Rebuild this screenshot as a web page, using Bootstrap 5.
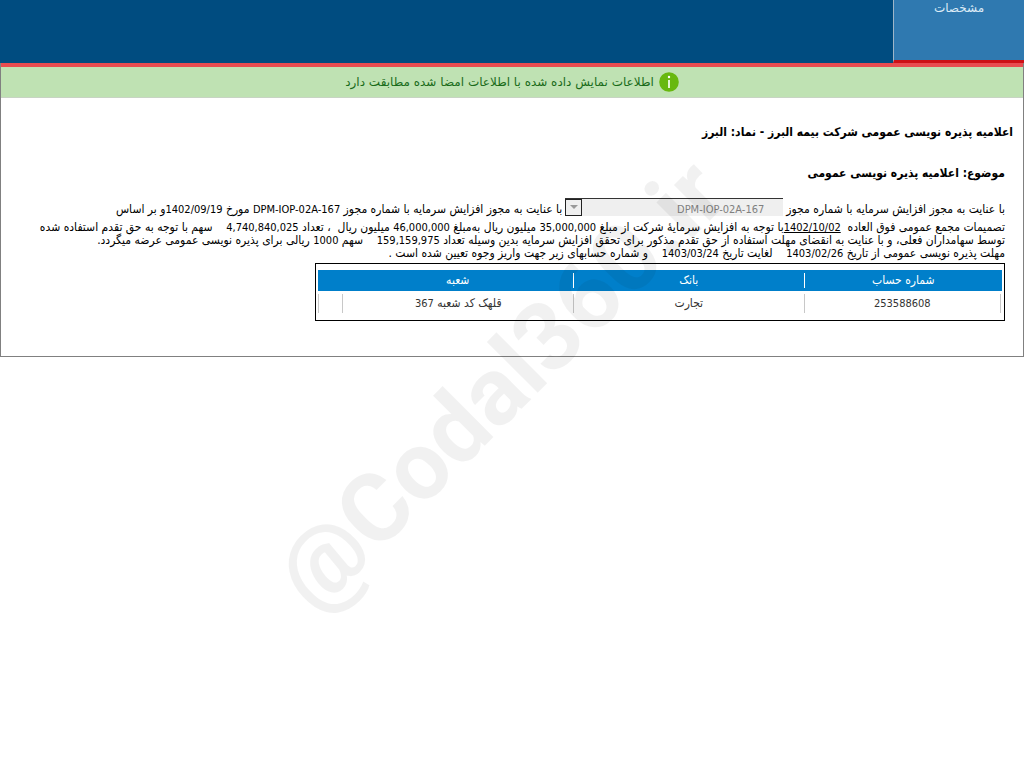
<!DOCTYPE html>
<html lang="fa" dir="rtl">
<head>
<meta charset="utf-8">
<meta name="viewport" content="width=device-width, initial-scale=1">
<title>اعلامیه پذیره نویسی عمومی</title>
<link rel="stylesheet" href="https://cdn.jsdelivr.net/npm/bootstrap@5.3.0/dist/css/bootstrap.min.css">
<style>
body { font-family: "DejaVu Sans Condensed", "DejaVu Sans", sans-serif; font-size: 12px; line-height: 13px; color: #000; background: #fff; }
.topbar { background: #004c80; height: 63px; }
.tab-link { width: 131px; height: 63px; padding-top: 1px; background: #2f79b0; border-left: 1px solid #9fb6c8; color: #dcebf6; border-bottom: 3px solid #cc1016; text-decoration: none; }
.tab-link, .notice { font-family: "DejaVu Sans", sans-serif; line-height: 14px; }
.panel { border: 1px solid #808080; border-top: 0; padding-bottom: 35px; }
.redline { height: 4px; background: #e84c50; }
.notice { background: #bfe2b3; color: #1a6b1a; height: 31px; gap: 5px; border-bottom: 1px solid #c8d4c4; }
.heading { font-size: 12px; line-height: 13px; font-weight: 700; margin: 0; }
.heading-main { padding: 28px 10px 0; }
.report { padding: 28px 18px 0; }
.permit { margin-top: 18px; gap: 3px; white-space: nowrap; }
.prose { white-space: nowrap; margin: 5px 0 3px; }
.num { font-size: 11px; }
.permit-box { width: 218px; height: 18px; }
.permit-box select { appearance: none; width: 100%; height: 100%; background: #efefef; border: 0; border-top: 1px solid #333; border-left: 1px solid #333; border-radius: 0; color: #808080; opacity: 1; padding: 3px 19px 0; direction: ltr; text-align: right; font-size: 11px; line-height: 13px; display: block; }
.drop { position: absolute; left: 0; top: 1px; width: 17px; height: 17px; border: 1px solid #222; background: #efefef; pointer-events: none; }
.accounts { width: 70%; border: 1px solid #000; padding: 6px 2px; }
.accounts table { width: 100%; table-layout: fixed; text-align: center; border-collapse: collapse; }
.accounts th { background: #007fca; color: #fff; font-weight: 400; height: 21px; padding: 3px 0; }
.accounts td { color: #333; height: 23px; padding: 3px 0 1px; }
.accounts th div { height: 15px; line-height: 15px; }
.accounts td div { height: 19px; line-height: 19px; border-left: 1px solid #c8c8c8; }
.accounts th.ruled div { border-left: 1px solid #fff; }
.accounts td:first-child div { border-right: 1px solid #c8c8c8; margin-right: 1px; }
.watermark { position: fixed; inset: 0; padding-right: 24px; pointer-events: none; overflow: hidden; }
.watermark span { font: 700 96px/1 Roboto, sans-serif; color: rgba(0,0,0,.055); transform: rotate(-45deg); white-space: nowrap; }
</style>
</head>
<body>
<nav class="topbar d-flex" aria-label="بخش‌ها">
  <a class="tab-link text-center" href="#details">مشخصات</a>
</nav>
<main class="panel" id="details">
  <div class="redline"></div>
  <div class="notice d-flex justify-content-center align-items-center" role="status">
    <svg width="20" height="20" viewBox="0 0 20 20" aria-hidden="true"><circle cx="10" cy="10" r="9.8" fill="#68b80f"/><circle cx="10" cy="5" r="1.2" fill="#fff"/><path d="M9 8h2v8H9z" fill="#e3f5d0"/></svg>
    <span>اطلاعات نمایش داده شده با اطلاعات امضا شده مطابقت دارد</span>
  </div>
  <h1 class="heading heading-main">اعلامیه پذیره نویسی عمومی شرکت بیمه البرز - نماد: البرز</h1>
  <section class="report">
    <h2 class="heading">موضوع: اعلامیه پذیره نویسی عمومی</h2>
    <div class="permit d-flex align-items-end">
      <label for="permit">با عنایت به مجوز افزایش سرمایه با شماره مجوز</label>
      <div class="permit-box position-relative">
        <select id="permit" disabled><option>DPM-IOP-02A-167</option></select>
        <span class="drop d-flex align-items-center justify-content-center"><svg width="8" height="5" viewBox="0 0 8 5" aria-hidden="true"><path d="M0 0h8L4 4z" fill="#999"/></svg></span>
      </div>
      <span>با عنایت به مجوز افزایش سرمایه با شماره مجوز <bdi class="num">DPM-IOP-02A-167</bdi> مورخ <bdi class="num">1402/09/19</bdi>و بر اساس</span>
    </div>
    <p class="prose">تصمیمات مجمع عمومی فوق العاده &nbsp;<bdi class="num"><u>1402/10/02</u></bdi>با توجه به افزایش سرمایهٔ شرکت از مبلغ <bdi class="num">35,000,000</bdi> میلیون ریال به‌مبلغ <bdi class="num">46,000,000</bdi> میلیون ریال &nbsp;، تعداد <bdi class="num">4,740,840,025</bdi> &nbsp;&nbsp; سهم با توجه به حق تقدم استفاده شده<br>
    توسط سهامداران فعلی، و با عنایت به انقضای مهلت استفاده از حق تقدم مذکور برای تحقق افزایش سرمایه بدین وسیله تعداد <bdi class="num">159,159,975</bdi> &nbsp;&nbsp; سهم <bdi class="num">1000</bdi> ریالی برای پذیره نویسی عمومی عرضه میگردد.<br>
    مهلت پذیره نویسی عمومی از تاریخ <bdi class="num">1403/02/26</bdi> &nbsp;&nbsp; لغایت تاریخ <bdi class="num">1403/03/24</bdi> &nbsp;&nbsp; و شماره حسابهای زیر جهت واریز وجوه تعیین شده است .</p>
    <div class="accounts">
      <table>
        <colgroup><col style="width:29%"><col style="width:33.7%"><col style="width:33.7%"><col></colgroup>
        <thead><tr><th class="ruled" scope="col"><div>شماره حساب</div></th><th class="ruled" scope="col"><div>بانک</div></th><th scope="col"><div>شعبه</div></th><th><div></div></th></tr></thead>
        <tbody><tr><td><div class="num">253588608</div></td><td><div>تجارت</div></td><td><div>قلهک کد شعبه <bdi class="num">367</bdi></div></td><td><div></div></td></tr></tbody>
      </table>
    </div>
  </section>
</main>
<div class="watermark d-flex align-items-center justify-content-center" aria-hidden="true"><span dir="ltr">@Codal360.ir</span></div>
<script src="https://cdn.jsdelivr.net/npm/bootstrap@5.3.0/dist/js/bootstrap.bundle.min.js"></script>
</body>
</html>
